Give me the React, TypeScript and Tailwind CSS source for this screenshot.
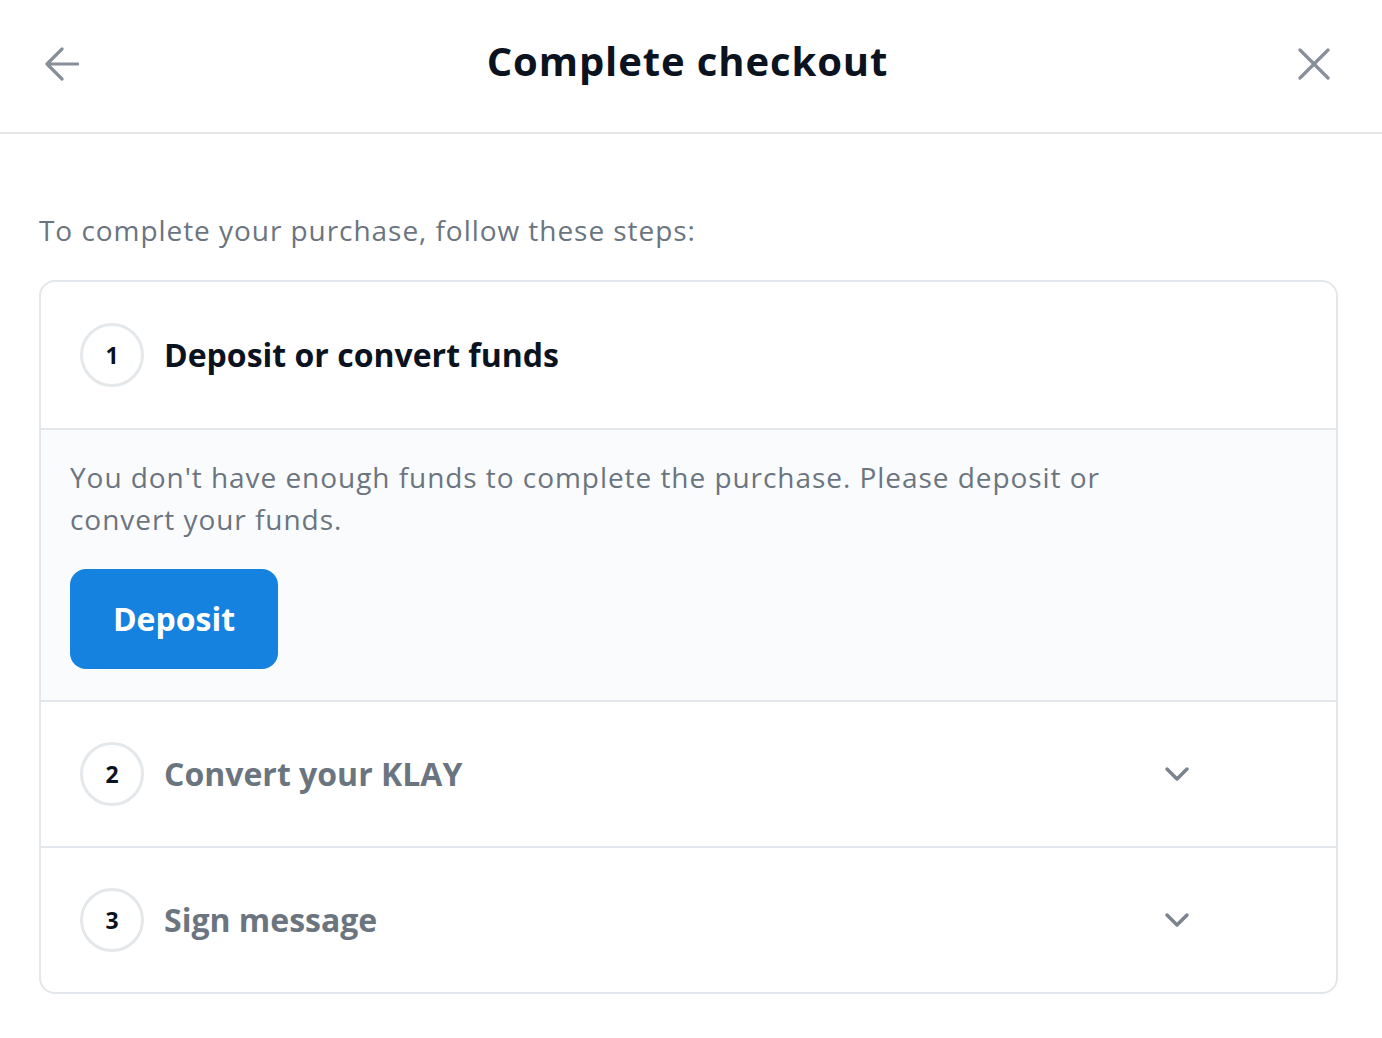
import { type ReactNode } from "react";

const FONT = "font-['Open_Sans',_'Liberation_Sans',_sans-serif]";

function BackIcon() {
  return (
    <svg width="34" height="34" viewBox="0 0 34 34" fill="none" stroke="#87909a" strokeWidth="3.2" strokeLinecap="round" strokeLinejoin="round">
      <path d="M2 17 L17 2 M2 17 L17 32 M2 17 H33" />
    </svg>
  );
}

function CloseIcon() {
  return (
    <svg width="32" height="32" viewBox="0 0 32 32" fill="none" stroke="#87909a" strokeWidth="3.2" strokeLinecap="round">
      <path d="M2 2 L30 30 M30 2 L2 30" />
    </svg>
  );
}

function Chevron() {
  return (
    <svg width="28" height="18" viewBox="0 0 28 18" fill="none" stroke="#7b848e" strokeWidth="3.5" strokeLinecap="round" strokeLinejoin="round">
      <path d="M4 4 L14 14 L24 4" />
    </svg>
  );
}

interface StepRowProps {
  n: number;
  title: string;
  active?: boolean;
  children?: ReactNode;
}

function StepRow({ n, title, active }: StepRowProps) {
  return (
    <div className={active ? "h-[146px] flex items-center pl-[39px] pr-[141px]" : "h-[144px] flex items-center pl-[39px] pr-[141px]"}>
      <div className="w-[64px] h-[64px] rounded-full border-[3px] border-[#e5e8eb] flex items-center justify-center text-[23px] font-bold text-[#0b1320]">
        {n}
      </div>
      <div
        className={
          active
            ? "ml-[20px] flex-1 text-[32px] font-bold text-[#0b1320]"
            : "ml-[20px] flex-1 text-[32px] font-bold text-[#6b7580]"
        }
      >
        {title}
      </div>
      {!active && (
        <div className="w-[36px] flex justify-center">
          <Chevron />
        </div>
      )}
    </div>
  );
}

export default function App() {
  return (
    <div className={`${FONT} w-[1382px] h-[1038px] bg-white overflow-hidden`}>
      <header className="h-[134px] border-b-2 border-[#e5e7eb] grid grid-cols-[1fr_auto_1fr] items-center pl-[45px] pr-[52px]">
        <div className="flex pb-[4px]">
          <BackIcon />
        </div>
        <h1 className="text-[40px] font-bold text-[#0b1320] tracking-[0.9px] pb-[10px]">
          Complete checkout
        </h1>
        <div className="flex justify-end pb-[4px]">
          <CloseIcon />
        </div>
      </header>

      <div className="px-[39px] pt-[75px]">
        <p className="text-[28px] leading-[42px] tracking-[0.95px] text-[#6b7580]">
          To complete your purchase, follow these steps:
        </p>

        <div className="mt-[29px] w-[1299px] border-2 border-[#e3e6ea] rounded-[16px] overflow-hidden">
          <StepRow n={1} title="Deposit or convert funds" active />

          <div className="border-t-2 border-[#e3e6ea] bg-[#fafbfd] pl-[29px] pt-[26px] pb-[31px]">
            <p className="text-[28px] leading-[42px] tracking-[0.95px] text-[#6b7580]">
              You don't have enough funds to complete the purchase. Please deposit or
              <br />
              convert your funds.
            </p>
            <button className="mt-[29px] w-[208px] h-[100px] rounded-[16px] bg-[#1482de] text-white text-[32px] font-bold">
              Deposit
            </button>
          </div>

          <div className="border-t-2 border-[#e3e6ea]">
            <StepRow n={2} title="Convert your KLAY" />
          </div>
          <div className="border-t-2 border-[#e3e6ea]">
            <StepRow n={3} title="Sign message" />
          </div>
        </div>
      </div>
    </div>
  );
}
